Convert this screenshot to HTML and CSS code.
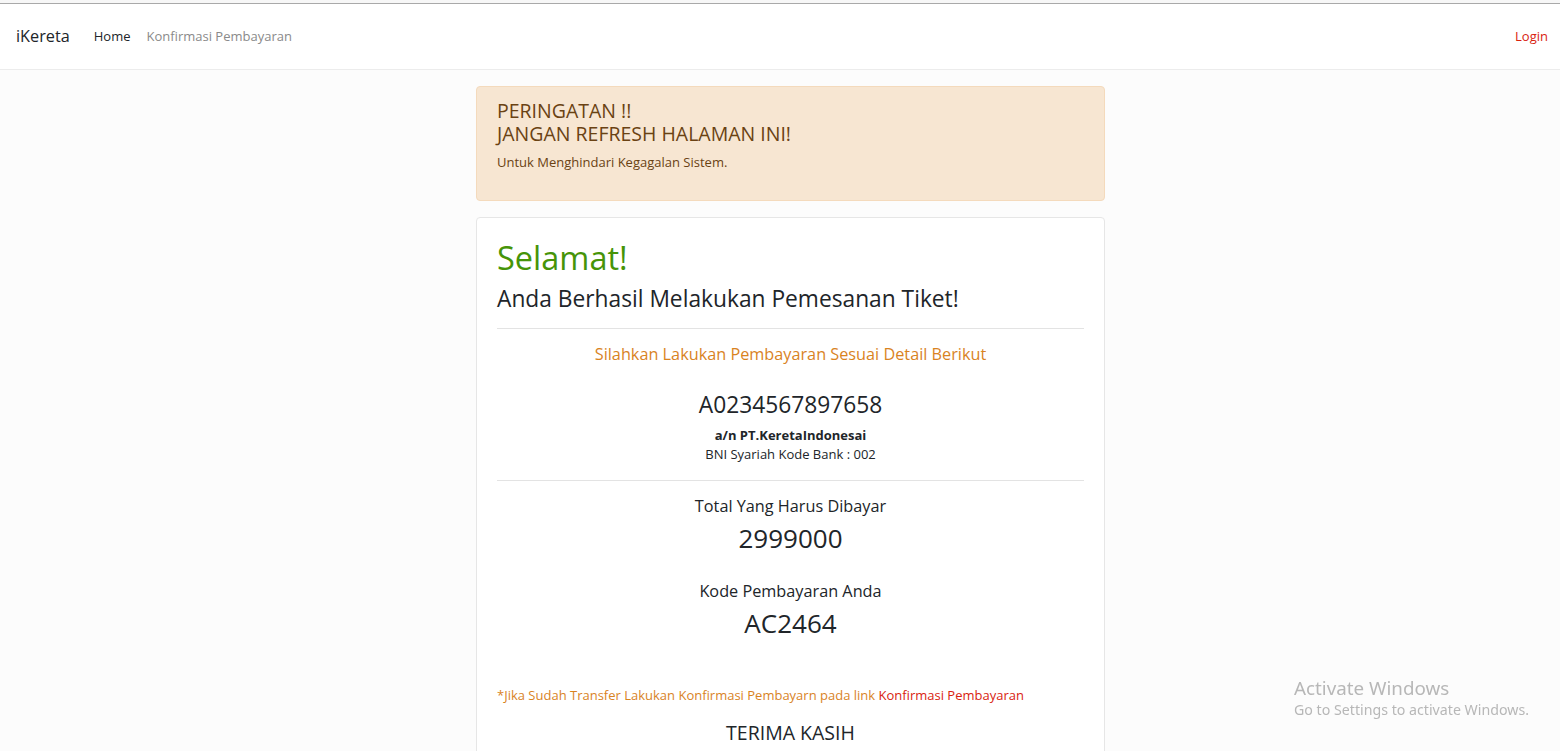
FILE: index.html
```html
<!DOCTYPE html>
<html lang="id">
<head>
<meta charset="utf-8">
<title>iKereta</title>
<link rel="stylesheet" href="styles.css">
</head>
<body>
<div class="topline"></div>
<nav class="navbar">
  <a class="brand" href="#">iKereta</a>
  <ul class="nav">
    <li><a class="nav-link active" href="#">Home</a></li>
    <li><a class="nav-link" href="#">Konfirmasi Pembayaran</a></li>
  </ul>
  <a class="login" href="#">Login</a>
</nav>
<main class="main">
  <div class="column">
    <div class="alert">
      <h4 class="alert-heading">PERINGATAN !!<br>JANGAN REFRESH HALAMAN INI!</h4>
      <p>Untuk Menghindari Kegagalan Sistem.</p>
    </div>
    <div class="card">
      <h1 class="success">Selamat!</h1>
      <h3>Anda Berhasil Melakukan Pemesanan Tiket!</h3>
      <hr class="first">
      <div class="center">
        <h5 class="warning">Silahkan Lakukan Pembayaran Sesuai Detail Berikut</h5>
        <br>
        <h3>A0234567897658</h3>
        <p class="bank"><b>a/n PT.KeretaIndonesai</b><br>BNI Syariah Kode Bank : 002</p>
      </div>
      <hr>
      <div class="center">
        <h5>Total Yang Harus Dibayar</h5>
        <h2>2999000</h2>
        <br>
        <h5>Kode Pembayaran Anda</h5>
        <h2>AC2464</h2>
        <br><br>
      </div>
      <p class="note"><span class="warning">*Jika Sudah Transfer Lakukan Konfirmasi Pembayarn pada link </span><a href="#" class="link">Konfirmasi Pembayaran</a></p>
      <h4 class="center thanks">TERIMA KASIH</h4>
    </div>
  </div>
</main>
<div class="watermark">
  <div class="wm-title">Activate Windows</div>
  <div class="wm-sub">Go to Settings to activate Windows.</div>
</div>
</body>
</html>
```

FILE: styles.css
```css
* { box-sizing: border-box; }
html, body { margin: 0; padding: 0; }
body {
  font-family: "Open Sans", "Noto Sans", sans-serif;
  font-size: 13px;
  line-height: 1.5;
  color: #212529;
  background: #fcfcfc;
  overflow: hidden;
  height: 751px;
}
a { text-decoration: none; }
.topline {
  height: 4px;
  background: #f7f7f7;
  border-bottom: 1px solid #a9a9a9;
}
.navbar {
  display: flex;
  align-items: center;
  height: 66px;
  padding: 0 12px 0 16px;
  background: #fff;
  border-bottom: 1px solid #ececec;
}
.brand {
  font-size: 16.25px;
  color: #212529;
  margin-right: 16px;
  line-height: 1.5;
}
.nav {
  display: flex;
  list-style: none;
  margin: 0;
  padding: 0;
  flex: 1;
}
.nav-link {
  display: block;
  padding: 8px;
  color: #8a8a8a;
}
.nav-link.active { color: #212529; }
.login { color: #d9230f; }
.main { padding-top: 16px; }
.column {
  width: 629px;
  margin-left: 476px;
}
.alert {
  background: #f7e6d2;
  border: 1px solid #f4dabc;
  border-radius: 4px;
  color: #6a4213;
  padding: 12px 20px 12px;
  margin-bottom: 16px;
}
.alert-heading {
  font-size: 19.5px;
  font-weight: 400;
  line-height: 1.2;
  margin: 0 0 7px;
}
.alert p { margin: 0 0 16px; }
.card {
  background: #fff;
  border: 1px solid #e6e6e6;
  border-radius: 4px;
  padding: 20px 20px 0;
}
h1, h2, h3, h4, h5 {
  font-weight: 400;
  line-height: 1.2;
  margin: 0 0 8px;
}
h1 { font-size: 32.5px; }
h2 { font-size: 26px; }
h3 { font-size: 22.75px; }
h4 { font-size: 19.5px; }
h5 { font-size: 16.25px; margin-bottom: 7px; }
hr {
  border: 0;
  border-top: 1px solid #e3e3e3;
  margin: 16px 0;
}
hr.first { margin-top: 15px; }
.success { color: #469408; }
.warning { color: #d9831f; }
.link { color: #d9230f; }
.center { text-align: center; }
.bank { margin: 0 0 16px; line-height: 1.45; }
.note { margin: 0 0 15px; }
.thanks { margin: 0; padding-bottom: 20px; }
.watermark {
  position: fixed;
  left: 1294px;
  top: 676px;
  color: rgba(160,160,160,0.75);
  font-family: "Noto Sans", "Open Sans", sans-serif;
}
.wm-title { font-size: 18.8px; line-height: 24px; }
.wm-sub { font-size: 14.2px; line-height: 20px; }
```
